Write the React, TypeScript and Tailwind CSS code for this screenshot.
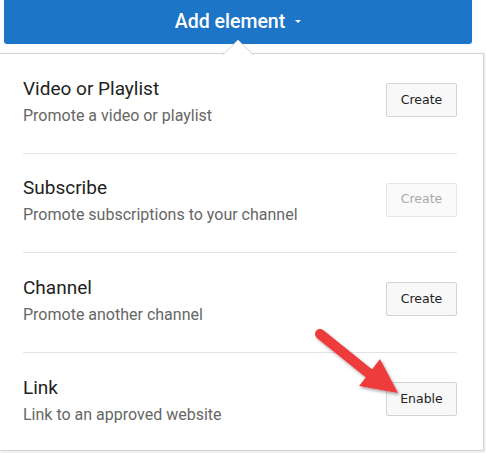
const ROWS = [
  { title: 'Video or Playlist', sub: 'Promote a video or playlist', action: 'Create', disabled: false },
  { title: 'Subscribe', sub: 'Promote subscriptions to your channel', action: 'Create', disabled: true },
  { title: 'Channel', sub: 'Promote another channel', action: 'Create', disabled: false },
  { title: 'Link', sub: 'Link to an approved website', action: 'Enable', disabled: false },
];

export default function App() {
  return (
    <div className="relative h-[453px] w-[486px] overflow-hidden bg-white font-['Roboto',sans-serif]">
      <div className="ml-1 flex h-[44px] w-[468px] items-center justify-center rounded-b-[3px] bg-[#1c75c7] text-[19.5px] font-medium text-white">
        <span>Add element</span>
        <span className="ml-[10px] mt-[-2px] h-0 w-0 border-x-[3px] border-t-[3px] border-x-transparent border-t-white" />
      </div>

      <div className="mt-[9px] h-[398px] w-[484px] border-y border-r border-[#d4d4d4] bg-white shadow-[1px_1px_3px_rgba(0,0,0,0.12)]">
        <ul role="list" className="px-[23px] pr-[26px]">
          {ROWS.map((row, i) => (
            <li
              key={row.title}
              className={
                'flex h-[99.5px] items-center justify-between ' +
                (i < ROWS.length - 1 ? 'border-b border-[#e3e3e3]' : '')
              }
            >
              <div className="-mt-[4px]">
                <h3 className="text-[19px] leading-[24px] text-[#222]">{row.title}</h3>
                <p className="mt-[5px] text-[16px] leading-[20px] text-[#666]">{row.sub}</p>
              </div>
              <button
                type="button"
                disabled={row.disabled}
                className={
                  "-mt-[6px] h-[34px] w-[71px] rounded-[2px] border font-['DejaVu_Sans',sans-serif] text-[12.5px] " +
                  (row.disabled
                    ? 'border-[#e6e6e6] bg-[#fafafa] text-[#aaa]'
                    : 'border-[#d3d3d3] bg-[#f8f8f8] text-[#222]')
                }
              >
                {row.action}
              </button>
            </li>
          ))}
        </ul>
      </div>

      {/* caret pointing up at the button */}
      <svg className="absolute left-[222px] top-[39px]" width="32" height="16" viewBox="0 0 32 16" aria-hidden="true">
        <polygon points="1,15.5 16,1 31,15.5" fill="#fff" stroke="#d4d4d4" strokeWidth="1" />
        <rect x="2" y="14.5" width="28" height="2" fill="#fff" />
      </svg>

      {/* red annotation arrow */}
      <svg className="absolute left-[305px] top-[320px]" width="110" height="90" viewBox="0 0 110 90" aria-hidden="true">
        <defs>
          <filter id="sh" x="-20%" y="-20%" width="140%" height="140%">
            <feDropShadow dx="1.5" dy="2" stdDeviation="1.5" floodColor="#000" floodOpacity="0.35" />
          </filter>
        </defs>
        <g filter="url(#sh)">
          <line x1="15" y1="14" x2="66" y2="55" stroke="#ee3b3b" strokeWidth="10" strokeLinecap="round" />
          <polygon points="93,73 75,39 54,66" fill="#ee3b3b" />
        </g>
      </svg>
    </div>
  );
}
